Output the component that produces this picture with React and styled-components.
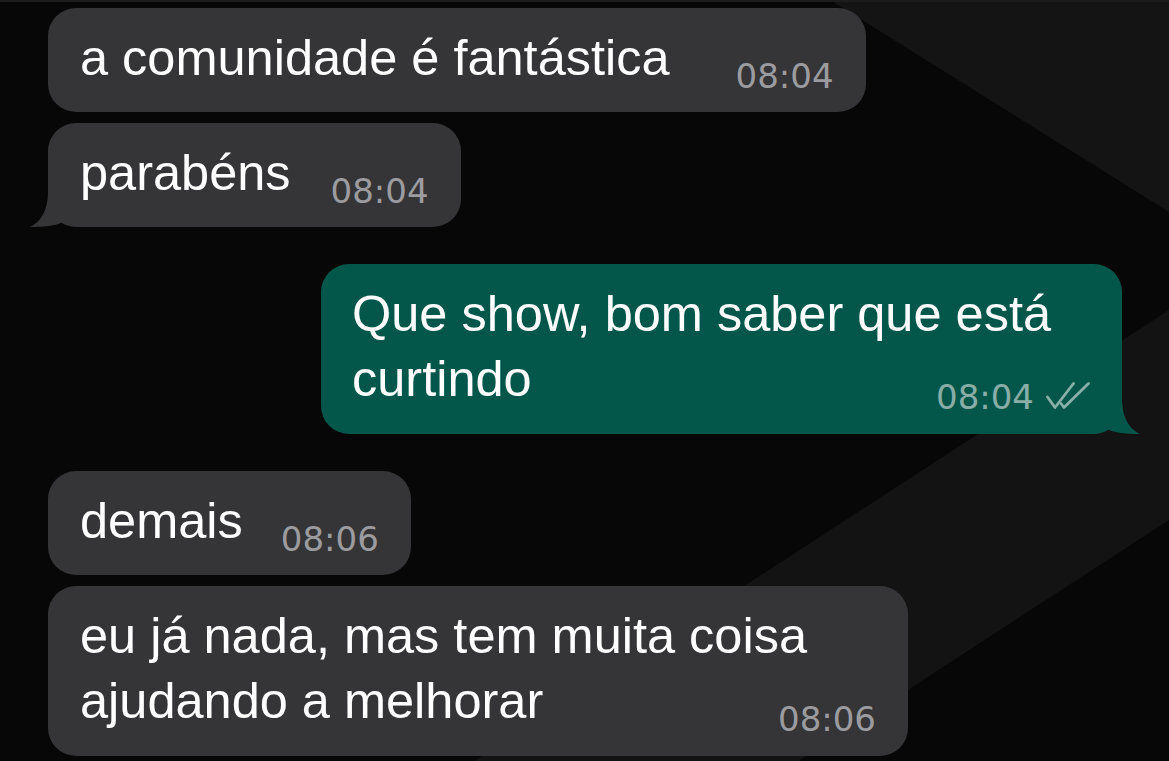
import styled, { createGlobalStyle } from 'styled-components';

const GlobalStyle = createGlobalStyle`
    html, body {
        margin: 0;
        padding: 0;
        background: #070707;
    }
`;

const backdrop =
    "data:image/svg+xml," +
    encodeURIComponent(
        "<svg xmlns='http://www.w3.org/2000/svg' viewBox='0 0 1169 761' preserveAspectRatio='none'>" +
        "<path d='M830 0H1169V212Z' fill='#141414'/>" +
        "<path d='M1169 310V520L788 768H464Z' fill='#131313'/>" +
        "<rect width='1169' height='2' fill='#1c1c1c'/>" +
        "</svg>"
    );

// each inner array is a run of messages from the same side
const messages = [
    [
        { text: 'a comunidade é fantástica', time: '08:04', gap: 66 },
        { text: 'parabéns', time: '08:04', gap: 40, tail: true },
    ],
    [
        { text: 'Que show, bom saber que está curtindo', time: '08:04', out: true, width: 801, tail: true },
    ],
    [
        { text: 'demais', time: '08:06', gap: 38 },
        { text: 'eu já nada, mas tem muita coisa ajudando a melhorar', time: '08:06', width: 860 },
    ],
];

const Tail = ({ out }) => (
    <TailShape $out={out} viewBox="0 0 50 36">
        <path d="M18 0H50V36C43 36 38 35 33 31C26 35 13 36 0 36C10 31 18 21 18 0Z" />
    </TailShape>
);

const ReadTicks = () => (
    <Ticks viewBox="0 0 44 27">
        <path d="M1.5 15L9 25.5L27.5 1.5" />
        <path d="M15 21.5L18 25.5L42.5 1.5" />
    </Ticks>
);

const App = () => {
    return (
        <Screen>
            <GlobalStyle />
            {messages.map((group, i) => (
                <Group key={i}>
                    {group.map((m, j) => (
                        <Bubble key={j} $out={m.out} $width={m.width}>
                            <Text>
                                {m.text}
                                <Meta $out={m.out} $gap={m.gap}>
                                    <Time>{m.time}</Time>
                                    {m.out && <ReadTicks />}
                                </Meta>
                            </Text>
                            {m.tail && <Tail out={m.out} />}
                        </Bubble>
                    ))}
                </Group>
            ))}
        </Screen>
    );
};

const Screen = styled.div`
    box-sizing: border-box;
    width: 1169px;
    height: 761px;
    overflow: hidden;
    display: flex;
    flex-direction: column;
    gap: 37px;
    padding: 8px 47px 0 48px;
    background-color: #070707;
    background-image: url("${backdrop}");
    background-size: 100% 100%;
`;

const Group = styled.div`
    display: flex;
    flex-direction: column;
    gap: 11px;
`;

const Bubble = styled.div`
    position: relative;
    display: flow-root;
    box-sizing: border-box;
    width: ${(p) => (p.$width ? `${p.$width}px` : 'fit-content')};
    align-self: ${(p) => (p.$out ? 'flex-end' : 'flex-start')};
    padding: 17px 32px ${(p) => (p.$width ? 23 : 22)}px ${(p) => (p.$out ? 31 : 32)}px;
    border-radius: 28px;
    background: ${(p) => (p.$out ? '#03574a' : '#353537')};
    color: ${(p) => (p.$out ? '#03574a' : '#353537')};
`;

const Text = styled.div`
    font-family: "Liberation Sans", Arial, sans-serif;
    font-size: 50.5px;
    line-height: 65px;
    color: #ffffff;
`;

const Meta = styled.span`
    float: right;
    display: inline-flex;
    align-items: flex-end;
    height: 28px;
    margin: 37px 0 0 ${(p) => p.$gap || 0}px;
    color: ${(p) => (p.$out ? '#88aea7' : '#9c9ca0')};
`;

const Time = styled.span`
    font-family: "DejaVu Sans", sans-serif;
    font-size: 34px;
    line-height: 28px;
`;

const Ticks = styled.svg`
    width: 44px;
    height: 27px;
    margin: 0 0 2px 12px;
    fill: none;
    stroke: #86b0a8;
    stroke-width: 2.8;
    stroke-linecap: round;
    stroke-linejoin: round;
`;

const TailShape = styled.svg`
    position: absolute;
    bottom: 0;
    ${(p) => (p.$out ? 'right: -18px; transform: scaleX(-1);' : 'left: -18px;')}
    width: 50px;
    height: 36px;
    fill: currentColor;
`;

export default App;
